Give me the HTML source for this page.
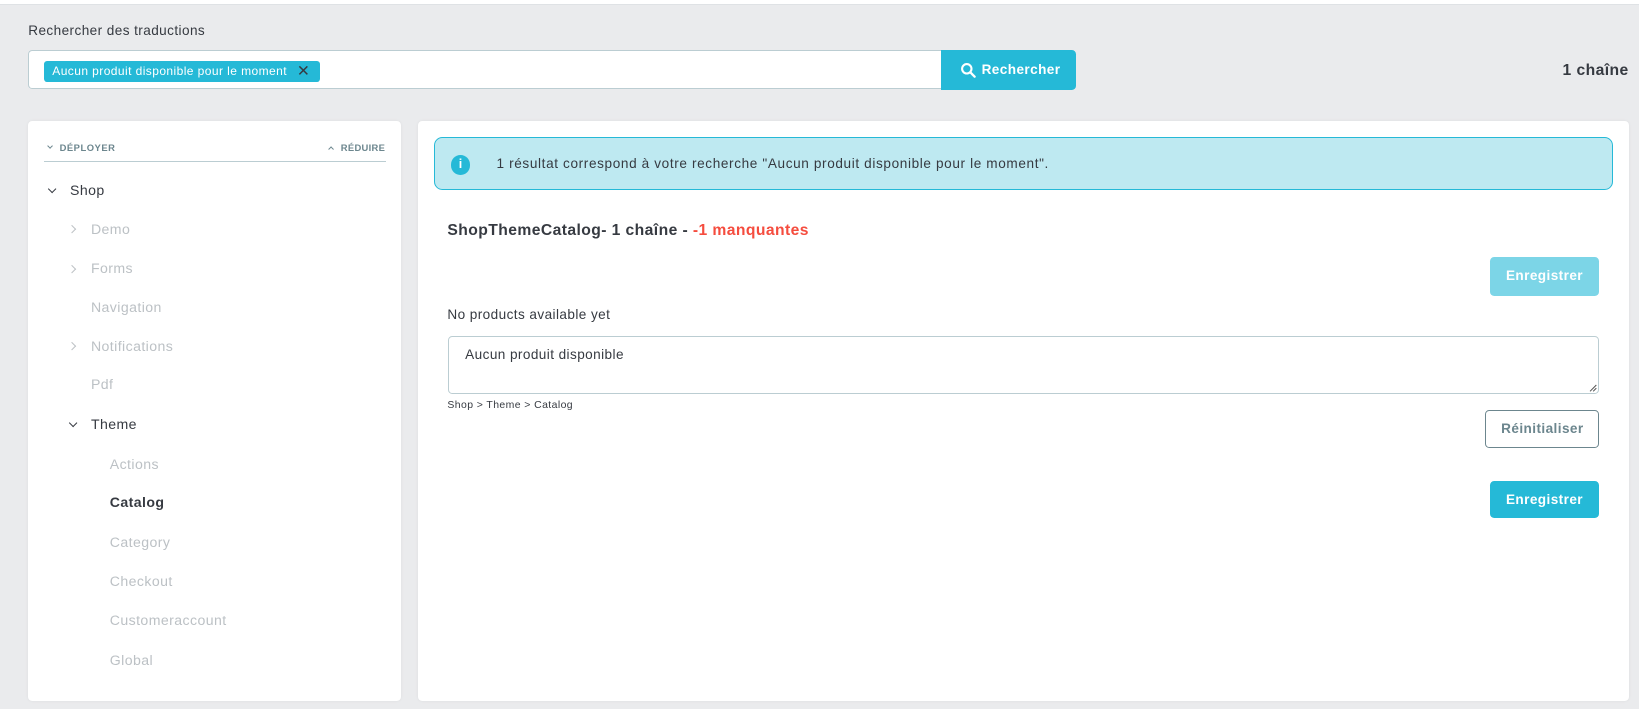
<!DOCTYPE html>
<html><head><meta charset="utf-8"><style>
html,body{margin:0;padding:0;}
body{width:1639px;height:709px;overflow:hidden;background:#eaebed;font-family:"Liberation Sans",sans-serif;color:#363a41;letter-spacing:.4px;}
#w{zoom:1.04534;position:relative;width:1568px;height:678px;}
.a{position:absolute;white-space:nowrap;}
.tl{position:absolute;top:0;left:0;right:0;height:4px;background:#fff;border-bottom:1px solid #dfe2e5;}
.panel{position:absolute;background:#fff;border-radius:4px;box-shadow:0 0 3px rgba(0,0,0,.06);}
.tree{font-size:13.5px;color:#bcc1c5;}
.btn{position:absolute;border-radius:4px;color:#fff;font-weight:bold;font-size:13px;text-align:center;}
.chev{position:absolute;width:5px;height:5px;border-right:1.5px solid;border-bottom:1.5px solid;}
</style></head><body><div id="w">
<div class="tl"></div>
<div class="a" style="left:27px;top:22px;font-size:13px;">Rechercher des traductions</div>
<div class="a" style="left:27px;top:48px;width:873px;height:37px;background:#fff;border:1px solid #bbcdd2;border-right:none;border-radius:4px 0 0 4px;box-sizing:border-box;"></div>
<div class="a" style="left:42px;top:58px;width:264px;height:20px;background:#25b9d7;border-radius:3px;"></div>
<div class="a" style="left:50px;top:61px;font-size:11.5px;color:#fff;">Aucun produit disponible pour le moment</div>
<div class="a" style="left:284px;top:58px;font-size:15px;color:#363a41;">✕</div>
<div class="btn" style="left:900px;top:48px;width:129px;height:38px;border-radius:0 4px 4px 0;background:#25b9d7;"></div>
<svg class="a" style="left:918px;top:59px" width="16" height="16" viewBox="0 0 16 16"><circle cx="6.5" cy="6.5" r="4.5" fill="none" stroke="#fff" stroke-width="2"/><path d="M10 10l4 4" stroke="#fff" stroke-width="2.2" stroke-linecap="round"/></svg>
<div class="a" style="left:939px;top:59px;font-size:13px;font-weight:bold;color:#fff;">Rechercher</div>
<div class="a" style="right:10px;top:59px;font-size:15px;font-weight:bold;color:#363a41;">1 chaîne</div>

<div class="panel" style="left:27px;top:116px;width:357px;height:555px;"></div>
<div class="chev" style="left:46px;top:138px;transform:rotate(45deg);width:3px;height:3px;color:#6c868e;"></div>
<div class="a" style="left:57px;top:136px;font-size:9px;font-weight:bold;color:#6c868e;letter-spacing:.5px;">DÉPLOYER</div>
<div class="chev" style="left:315px;top:141px;transform:rotate(-135deg);width:3px;height:3px;color:#6c868e;"></div>
<div class="a" style="left:326px;top:136px;font-size:9px;font-weight:bold;color:#6c868e;letter-spacing:.3px;">RÉDUIRE</div>
<div class="a" style="left:42px;top:154px;width:327px;height:1px;background:#bbcdd2;"></div>

<div class="chev" style="left:47px;top:178px;transform:rotate(45deg);color:#363a41;"></div>
<div class="a" style="left:67px;top:174px;font-size:13.5px;">Shop</div>
<div class="tree">
<div class="chev" style="left:66px;top:216px;transform:rotate(-45deg);"></div>
<div class="a" style="left:87px;top:211px;">Demo</div>
<div class="chev" style="left:66px;top:254px;transform:rotate(-45deg);"></div>
<div class="a" style="left:87px;top:249px;">Forms</div>
<div class="a" style="left:87px;top:286px;">Navigation</div>
<div class="chev" style="left:66px;top:328px;transform:rotate(-45deg);"></div>
<div class="a" style="left:87px;top:323px;">Notifications</div>
<div class="a" style="left:87px;top:360px;">Pdf</div>
<div class="a" style="left:105px;top:436px;">Actions</div>
<div class="a" style="left:105px;top:511px;">Category</div>
<div class="a" style="left:105px;top:548px;">Checkout</div>
<div class="a" style="left:105px;top:585px;">Customeraccount</div>
<div class="a" style="left:105px;top:624px;">Global</div>
</div>
<div class="chev" style="left:67px;top:402px;transform:rotate(45deg);color:#363a41;"></div>
<div class="a" style="left:87px;top:398px;font-size:13.5px;">Theme</div>
<div class="a" style="left:105px;top:473px;font-size:13.5px;font-weight:bold;">Catalog</div>

<div class="panel" style="left:400px;top:116px;width:1158px;height:555px;"></div>
<div class="a" style="left:415px;top:131px;width:1128px;height:51px;background:#bee9f1;border:1px solid #25b9d7;border-radius:8px;box-sizing:border-box;"></div>
<div class="a" style="left:431px;top:148px;width:19px;height:19px;border-radius:50%;background:#25b9d7;color:#fff;font-size:12px;font-weight:bold;text-align:center;line-height:19px;letter-spacing:0;">i</div>
<div class="a" style="left:475px;top:149px;font-size:13px;letter-spacing:.6px;">1 résultat correspond à votre recherche "Aucun produit disponible pour le moment".</div>
<div class="a" style="left:428px;top:212px;font-size:15px;font-weight:bold;">ShopThemeCatalog- 1 chaîne - <span style="color:#f54c3e">-1 manquantes</span></div>
<div class="btn" style="left:1425px;top:246px;width:105px;height:37px;line-height:37px;background:#7cd5e7;">Enregistrer</div>
<div class="a" style="left:428px;top:294px;font-size:13px;">No products available yet</div>
<div class="a" style="left:429px;top:321px;width:1101px;height:56px;border:1px solid #bbcdd2;border-radius:4px;box-sizing:border-box;"></div>
<svg class="a" style="left:1520px;top:367px" width="8" height="8"><path d="M1 7L7 1M4 7L7 4" stroke="#555" stroke-width="1"/></svg>
<div class="a" style="left:445px;top:332px;font-size:13px;">Aucun produit disponible</div>
<div class="a" style="left:428px;top:383px;font-size:10px;">Shop &gt; Theme &gt; Catalog</div>
<div class="btn" style="left:1421px;top:392px;width:109px;height:37px;line-height:35px;box-sizing:border-box;border:1px solid #6c868e;color:#6c868e;background:#fff;">Réinitialiser</div>
<div class="btn" style="left:1425px;top:460px;width:105px;height:36px;line-height:36px;background:#25b9d7;">Enregistrer</div>
</div></body></html>
